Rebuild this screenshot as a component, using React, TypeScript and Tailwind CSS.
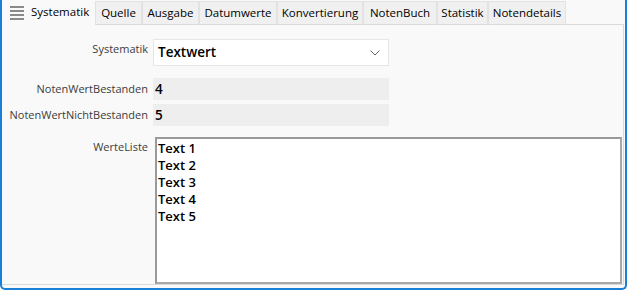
import React from "react";

const tabs: { label: string; w: string }[] = [
  { label: "Quelle", w: "w-[47px]" },
  { label: "Ausgabe", w: "w-[57px]" },
  { label: "Datumwerte", w: "w-[78px]" },
  { label: "Konvertierung", w: "w-[86px]" },
  { label: "NotenBuch", w: "w-[74px]" },
  { label: "Statistik", w: "w-[51px]" },
  { label: "Notendetails", w: "w-[78px]" },
];

export default function App() {
  return (
    <div
      className="w-[627px] h-[291px] bg-white overflow-hidden"
      style={{ fontFamily: '"Open Sans", "Noto Sans", sans-serif' }}
    >
      <div className="h-[290px] border-x-2 border-b-2 border-[#1a7fd6] rounded-b-[5px] bg-[#f9f9f9] flex flex-col">
        {/* tab strip */}
        <div className="h-[25px] flex items-end shrink-0 pr-[1px]">
          <div className="w-[93px] h-[25px] flex items-center bg-[#f9f9f9]">
            <svg width="14" height="16" viewBox="0 0 14 16" className="ml-[8px] mr-[7px] mt-[1px]">
              <rect x="0" y="1" width="14" height="2" fill="#8a8a8a" />
              <rect x="0" y="5" width="14" height="2" fill="#8a8a8a" />
              <rect x="0" y="9" width="14" height="2" fill="#8a8a8a" />
              <rect x="0" y="13" width="14" height="2" fill="#8a8a8a" />
            </svg>
            <span className="text-[11.5px] text-black leading-none mt-[-2px]">Systematik</span>
          </div>
          {tabs.map((t) => (
            <div
              key={t.label}
              className={`${t.w} h-[24px] bg-[#f0f0f0] border border-[#e2e2e2] border-b-[#dadada] flex items-center justify-center text-[11.5px] text-black leading-none shrink-0 whitespace-nowrap`}
            >
              {t.label}
            </div>
          ))}
          <div className="flex-1 h-[1px] border-b border-[#dadada] bg-white self-end" />
        </div>

        {/* content panel */}
        <div className="flex-1 border-r border-b border-[#dadada] mr-[1px] mb-[4px] pt-[14px] pr-[1px]">
          <div className="grid grid-cols-[146px_236px] gap-x-[5px] items-start">
            <div className="text-right text-[11px] text-[#3c3c3c] pt-[2px] leading-[16px] whitespace-nowrap">Systematik</div>
            <div className="h-[27px] bg-white border border-[#e6e6e6] flex items-center justify-between pl-[4px] pr-[8px]">
              <span className="text-[13.5px] font-semibold text-black">Textwert</span>
              <svg width="10" height="6" viewBox="0 0 10 6">
                <path d="M0.5 0.5 L5 5 L9.5 0.5" fill="none" stroke="#666" strokeWidth="1" />
              </svg>
            </div>

            <div className="text-right text-[11px] text-[#3c3c3c] mt-[12px] pt-[3px] leading-[16px] whitespace-nowrap">NotenWertBestanden</div>
            <div className="h-[22px] bg-[#eeeeee] mt-[12px] flex items-center pl-[2px] text-[13.5px] font-semibold text-black">4</div>

            <div className="text-right text-[11px] text-[#3c3c3c] mt-[4px] pt-[3px] leading-[16px] whitespace-nowrap">NotenWertNichtBestanden</div>
            <div className="h-[22px] bg-[#eeeeee] mt-[4px] flex items-center pl-[2px] text-[13.5px] font-semibold text-black">5</div>
          </div>

          <div className="flex mt-[11px] items-start">
            <div className="w-[146px] text-right text-[11px] text-[#3c3c3c] pt-[2px] leading-[16px]">WerteListe</div>
            <div className="ml-[7px] flex-1 h-[147px] bg-white border-2 border-[#a8a8a8] border-l-[#9a9a9a] border-t-[#9a9a9a] pt-[1px] pl-[1px]">
              {["Text 1", "Text 2", "Text 3", "Text 4", "Text 5"].map((s) => (
                <div key={s} className="text-[13px] font-semibold text-black leading-[17px]">
                  {s}
                </div>
              ))}
            </div>
          </div>
        </div>
      </div>
    </div>
  );
}
